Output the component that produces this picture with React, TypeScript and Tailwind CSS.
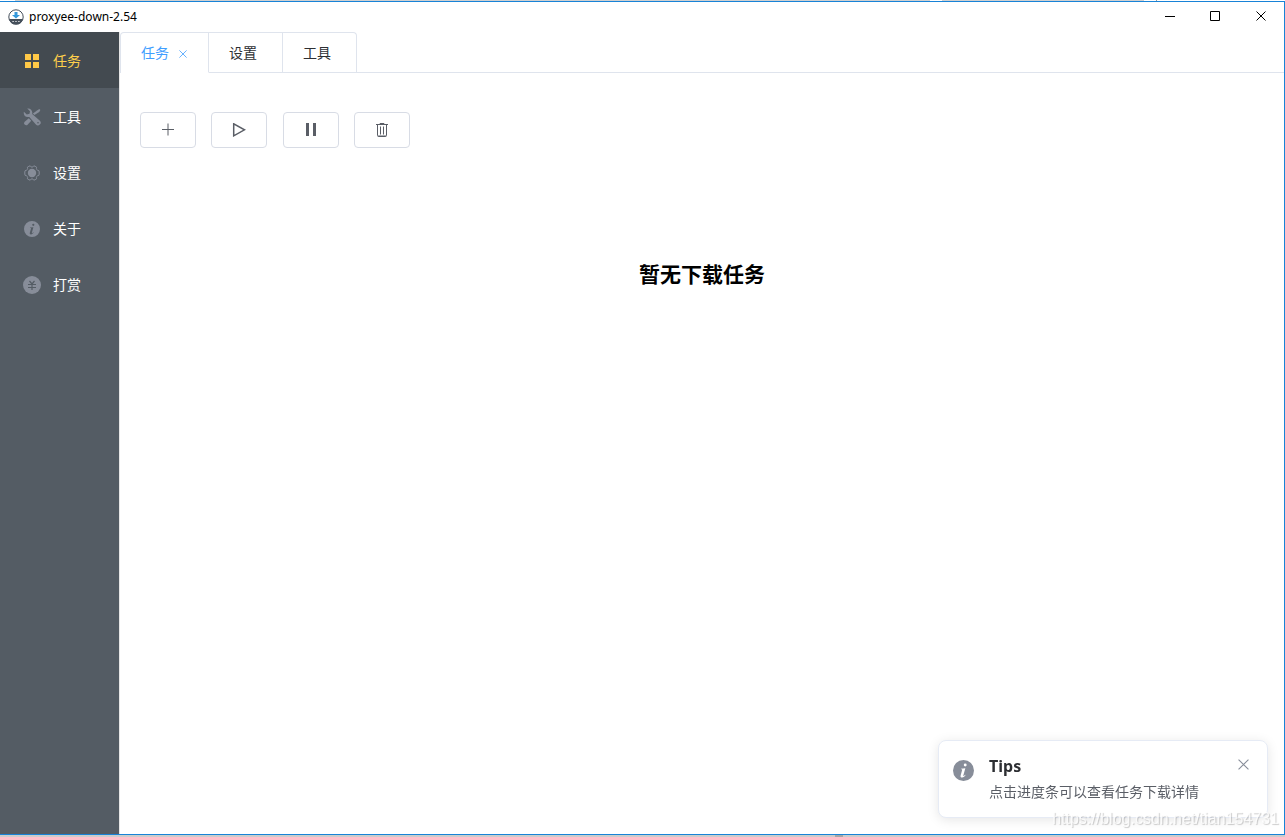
import { useState } from "react";

const menu = [
  { name: "任务", icon: <GridIcon /> },
  { name: "工具", icon: <ToolsIcon /> },
  { name: "设置", icon: <GearIcon /> },
  { name: "关于", icon: <InfoIcon className="h-4 w-4" /> },
  { name: "打赏", icon: <YenIcon /> },
];

const actions = [
  { name: "新建", icon: <PlusIcon /> },
  { name: "开始", icon: <PlayIcon /> },
  { name: "暂停", icon: <PauseIcon /> },
  { name: "删除", icon: <TrashIcon /> },
];

function GridIcon() {
  return (
    <svg className="h-4 w-4" viewBox="0 0 16 16" fill="currentColor">
      <path d="M1 1h6v6H1zM9 1h6v6H9zM1 9h6v6H1zM9 9h6v6H9z" />
    </svg>
  );
}

function ToolsIcon() {
  return (
    <svg className="h-[18px] w-[18px] shrink-0" viewBox="0 0 18 18" fill="currentColor">
      <path d="M4.2.5 7 3.2l-.5 2.6-2.7.6L.9 3.8C.1 6.7 2.2 9.3 5 9.1l1.3-.2 6.6 7.6a2.7 2.7 0 1 0 4-3.8L9.2 6.1C9.9 2.6 7.6 0 4.2.5z" />
      <path d="M11.4 7 9.9 5.500 14.400 2.200 16.400 1 17.400 2 16.200 4z" />
      <path d="M5.800 10.200 8.200 12.800 4.600 16.800Q3.100 18 1.600 16.600T1.700 13.700z" />
      <circle cx="15" cy="14.800" r=".8" fill="#545c64" />
    </svg>
  );
}

function GearIcon() {
  return (
    <svg className="h-4 w-4" viewBox="0 0 16 16" fill="none" stroke="currentColor">
      <path
        d="M4.900 1.300 6.200.8 7.100 1.900Q8 2.400 8.900 1.900L9.800.8 11.100 1.300 12.600 2.200 12.400 3.600Q12.500 4.700 13.500 5.200L14.900 5.700 15.200 7V9L14.900 10.300 13.500 10.800Q12.500 11.300 12.400 12.400L12.600 13.800 11.100 14.700 9.800 15.200 8.900 14.100Q8 13.600 7.100 14.100L6.200 15.200 4.900 14.700 3.400 13.800 3.600 12.400Q3.500 11.300 2.500 10.800L1.100 10.300.8 9V7L1.100 5.700 2.500 5.200Q3.500 4.700 3.600 3.600L3.400 2.200z"
        strokeLinejoin="round"
      />
      <circle cx="8" cy="8" r="4.200" fill="currentColor" stroke="none" />
    </svg>
  );
}

function InfoIcon({ className }: { className: string }) {
  return (
    <svg className={`${className} shrink-0`} viewBox="0 0 16 16" fill="currentColor">
      <path
        fillRule="evenodd"
        d="M8 0a8 8 0 1 1 0 16A8 8 0 0 1 8 0zM9.300 2.700a1.100 1.100 0 1 0 0 2.200 1.100 1.100 0 0 0 0-2.200zM6 6.600l.2.500c.8-.1.900.1.700.8l-1 3.500c-.4 1.300 0 2 1 2 1.200 0 2-.8 2.700-1.900l-.4-.3c-.5.7-.9 1-1.200 1-.2 0-.2-.2-.1-.6l1.500-5.400z"
      />
    </svg>
  );
}

function YenIcon() {
  return (
    <svg className="h-[18px] w-[18px] shrink-0" viewBox="0 0 18 18">
      <circle cx="9" cy="9" r="9" fill="currentColor" />
      <path
        d="M6.500 5 9 8l2.500-3M5 8.500h8M5 11.500h8M9 8v6"
        fill="none"
        stroke="#545c64"
        strokeWidth="1.200"
      />
    </svg>
  );
}

function PlusIcon() {
  return (
    <svg className="h-3.5 w-3.5" viewBox="0 0 14 14" fill="none" stroke="currentColor">
      <path d="M1 6.500h12M7 .5v12" />
    </svg>
  );
}

function PlayIcon() {
  return (
    <svg className="h-3.5 w-3.5" viewBox="0 0 14 14" fill="none" stroke="currentColor">
      <path d="M1.700.8v12L12.500 6.800z" strokeWidth="1.500" />
    </svg>
  );
}

function PauseIcon() {
  return (
    <svg className="h-3.5 w-3.5" viewBox="0 0 14 14" fill="currentColor">
      <path d="M2 0h3v13H2zM9 0h3v13H9z" />
    </svg>
  );
}

function TrashIcon() {
  return (
    <svg className="h-3.5 w-3.5" viewBox="0 0 14 14" fill="none" stroke="currentColor">
      <path d="M1 1.500h12M5 1.500V.5h4v1M2.500 1.500v11q0 1 1 1h7q1 0 1-1v-11M3 13h8" />
      <path d="M5.500 3.500v8M8.500 3.500v8" />
    </svg>
  );
}

function CrossIcon({ className }: { className: string }) {
  return (
    <svg className={className} viewBox="0 0 10 10" fill="none" stroke="currentColor">
      <path d="M.5.5l9 9M9.500.5l-9 9" />
    </svg>
  );
}

function AppLogo() {
  return (
    <svg className="h-4 w-4" viewBox="0 0 16 16">
      <circle cx="8" cy="8" r="7.200" fill="#fff" stroke="#454f5b" />
      <path d="M1 10h14a7.200 7.200 0 0 1-14 0z" fill="#454f5b" />
      <path d="M6.500 3h3v3H12L8 9.500 4 6h2.500z" fill="#3498db" />
      <path d="M4.500 12.500h1.200M7.400 12.500h1.200M10.300 12.500h1.200" stroke="#fff" />
    </svg>
  );
}

function TitleBar() {
  return (
    <header className="flex h-[30px] items-center justify-between bg-white pl-2">
      <div className="flex items-center gap-[5px] font-['Noto_Sans','Open_Sans',sans-serif] text-xs text-black">
        <AppLogo />
        proxyee-down-2.54
      </div>
      <div className="flex h-7 self-start text-black">
        <button aria-label="最小化" className="flex w-[45px] items-center justify-center">
          <svg className="h-2.5 w-2.5" viewBox="0 0 10 10" stroke="currentColor">
            <path d="M0 5.500h10" />
          </svg>
        </button>
        <button aria-label="最大化" className="flex w-[46px] items-center justify-center">
          <svg className="h-2.5 w-2.5" viewBox="0 0 10 10" fill="none" stroke="currentColor">
            <path d="M.5.5h9v9h-9z" />
          </svg>
        </button>
        <button aria-label="关闭" className="flex w-[46px] items-center justify-center">
          <CrossIcon className="h-2.5 w-2.5" />
        </button>
      </div>
    </header>
  );
}

function Sidebar() {
  return (
    <nav className="w-[120px] shrink-0 border-r border-[#e6e6e6] bg-[#545c64]">
      {menu.map((item, i) => (
        <a
          key={item.name}
          href="#"
          className={`flex h-14 items-center gap-2 pl-5 text-sm ${
            i === 0 ? "bg-[#434a50] text-[#ffd04b]" : "text-white"
          }`}
        >
          <span
            className={`flex w-6 justify-center pt-0.5 ${
              i === 0 ? "text-[#ffc947]" : "text-[#878d99]"
            }`}
          >
            {item.icon}
          </span>
          <span className="pl-px">{item.name}</span>
        </a>
      ))}
    </nav>
  );
}

function Tabs() {
  return (
    <div className="flex h-[41px] border-b border-[#dfe4ed]">
      <div role="tablist" className="-mb-px flex rounded-t border border-b-0 border-[#dfe4ed]">
        <div className="flex items-center gap-2.5 border-r border-b border-r-[#dfe4ed] border-b-white pr-[21px] pl-5 text-sm text-[#409eff]">
          <button role="tab" aria-selected="true" className="pb-0.5">
            任务
          </button>
          <button aria-label="关闭标签" className="pt-0.5">
            <CrossIcon className="h-2 w-2" />
          </button>
        </div>
        <button
          role="tab"
          aria-selected="false"
          className="border-r border-b border-[#dfe4ed] pr-[25px] pb-0.5 pl-5 text-sm text-[#2d2f33]"
        >
          设置
        </button>
        <button
          role="tab"
          aria-selected="false"
          className="border-b border-[#dfe4ed] pr-[25px] pb-0.5 pl-5 text-sm text-[#2d2f33]"
        >
          工具
        </button>
      </div>
    </div>
  );
}

function Tips({ onClose }: { onClose: () => void }) {
  return (
    <div
      role="alert"
      className="fixed right-[17px] bottom-[19px] flex w-[330px] gap-[15px] rounded-lg border border-[#e6ebf5] bg-white py-3.5 pr-[18px] pl-3.5 shadow-[0_2px_12px_0_rgba(0,0,0,0.1)]"
    >
      <span className="pt-[5px] text-[#878d99]">
        <InfoIcon className="h-[21px] w-[21px]" />
      </span>
      <div className="flex-1">
        <h2 className="font-['Noto_Sans','Open_Sans',sans-serif] text-base leading-[22px] font-bold text-[#2d2f33]">
          Tips
        </h2>
        <p className="pt-1 pb-0.5 text-sm leading-5 text-[#5a5e66]">
          点击进度条可以查看任务下载详情
        </p>
      </div>
      <button aria-label="关闭提示" className="self-start pt-1 text-[#878d99]" onClick={onClose}>
        <CrossIcon className="h-[11px] w-[11px]" />
      </button>
    </div>
  );
}

export default function App() {
  const [showTips, setShowTips] = useState(true);

  return (
    <div className="flex min-h-screen flex-col bg-white font-['Noto_Sans_CJK_SC',sans-serif]">
      <div className="flex h-px gap-3">
        <div className="ml-[15px] w-[71.2%] bg-[#d0d0d0]" />
        <div className="w-[202px] bg-[#d0d0d0]" />
        <div className="w-px bg-[#999999]" />
      </div>
      <div className="flex flex-1 flex-col border-t border-r border-b border-[#1883d7]">
        <TitleBar />
        <div className="flex flex-1">
          <Sidebar />
          <main className="min-w-0 flex-1">
            <Tabs />
            <div className="p-5 pt-[39px]">
              <div className="flex w-[270px] justify-between">
                {actions.map((action) => (
                  <button
                    key={action.name}
                    aria-label={action.name}
                    className="flex h-9 w-14 items-center justify-center rounded border border-[#d8dce5] bg-white text-[#5a5e66]"
                  >
                    {action.icon}
                  </button>
                ))}
              </div>
              <h1 className="pt-[110px] text-center text-[21px] leading-[30px] font-bold text-black">
                暂无下载任务
              </h1>
            </div>
          </main>
        </div>
      </div>
      <div className="flex h-0.5 bg-[#cccccc]">
        <div className="ml-[65%] w-2 bg-[#a6a6a6]" />
      </div>
      {showTips && <Tips onClose={() => setShowTips(false)} />}
      <div className="pointer-events-none fixed right-1.5 bottom-2 font-['Liberation_Sans',sans-serif] text-base leading-5 text-white/80 [text-shadow:1px_1px_1px_rgba(0,0,0,0.2)]">
        https://blog.csdn.net/tian154731
      </div>
    </div>
  );
}
